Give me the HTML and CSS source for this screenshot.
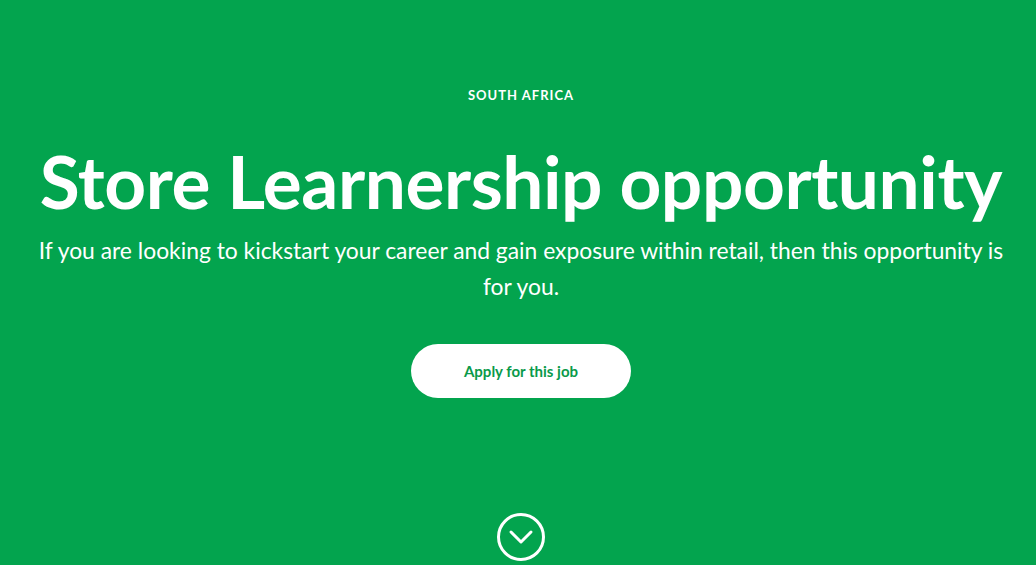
FILE: index.html
```html
<!DOCTYPE html>
<html>
<head>
<meta charset="utf-8">
<link rel="stylesheet" href="styles.css">
</head>
<body>
<main class="hero">
  <p class="eyebrow">SOUTH AFRICA</p>
  <h1 class="title">Store Learnership opportunity</h1>
  <p class="lead">If you are looking to kickstart your career and gain exposure within retail, then this opportunity is for you.</p>
  <a class="apply" href="#">Apply for this job</a>
  <div class="scroll">
    <svg width="50" height="50" viewBox="0 0 50 50">
      <circle cx="25" cy="25" r="22.5" fill="none" stroke="#fff" stroke-width="3"/>
      <path d="M15 20 L25 30 L35 20" fill="none" stroke="#fff" stroke-width="3" stroke-linecap="round" stroke-linejoin="round"/>
    </svg>
  </div>
</main>
</body>
</html>
```
FILE: styles.css
```css
html, body {
  margin: 0;
  padding: 0;
  height: 100%;
  overflow: hidden;
}
body {
  background: #03a44e;
  font-family: "Lato", "Open Sans", sans-serif;
  color: #fff;
}
.hero {
  display: flex;
  flex-direction: column;
  align-items: center;
  text-align: center;
  padding: 87px 24px 0 30px;
}
.eyebrow {
  margin: 0;
  font-size: 13px;
  font-weight: 700;
  letter-spacing: 1px;
  line-height: 16px;
}
.title {
  margin: 38px 0 0;
  font-size: 73px;
  font-weight: 700;
  line-height: 80px;
  letter-spacing: -0.45px;
}
.lead {
  margin: 11px 0 0;
  font-size: 22.85px;
  line-height: 36px;
  max-width: 980px;
}
.apply {
  margin-top: 40px;
  width: 220px;
  height: 54px;
  border-radius: 27px;
  background: #fff;
  color: #0a9a4a;
  text-decoration: none;
  font-size: 15px;
  font-weight: 700;
  display: flex;
  align-items: center;
  justify-content: center;
}
.scroll {
  margin-top: 114px;
  line-height: 0;
}
```
